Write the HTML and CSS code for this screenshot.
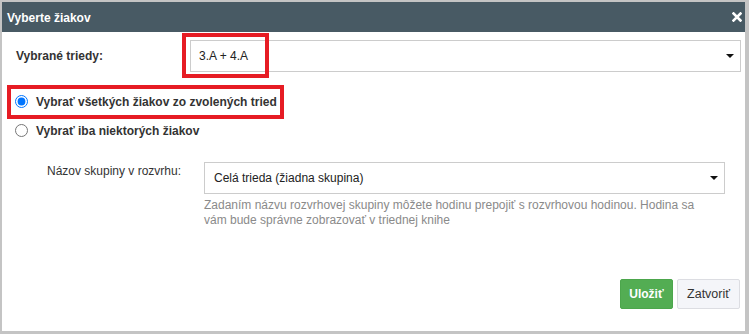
FILE: index.html
```html
<!DOCTYPE html>
<html lang="sk">
<head>
<meta charset="utf-8">
<title>Vyberte žiakov</title>
<link rel="stylesheet" href="styles.css">
</head>
<body>
<div class="modal">
  <div class="modal-header">
    <span class="modal-title">Vyberte žiakov</span>
    <svg class="close" width="10" height="10" viewBox="0 0 10 10" aria-hidden="true">
      <path d="M1.5 1.5 L8.5 8.5 M8.5 1.5 L1.5 8.5" stroke="#fff" stroke-width="2.6" stroke-linecap="square"/>
    </svg>
  </div>
  <div class="modal-body">
    <div class="row-classes">
      <label class="lbl-bold">Vybrané triedy:</label>
      <div class="select sel-classes">
        <span>3.A + 4.A</span>
        <span class="caret"></span>
      </div>
    </div>
    <div class="radios">
      <label class="radio"><input type="radio" name="mode" checked><span class="lbl-bold">Vybrať všetkých žiakov zo zvolených tried</span></label>
      <label class="radio"><input type="radio" name="mode"><span class="lbl-bold">Vybrať iba niektorých žiakov</span></label>
    </div>
    <div class="group-row">
      <label class="group-label">Názov skupiny v rozvrhu:</label>
      <div class="group-field">
        <div class="select sel-group">
          <span>Celá trieda (žiadna skupina)</span>
          <span class="caret"></span>
        </div>
        <p class="help">Zadaním názvu rozvrhovej skupiny môžete hodinu prepojiť s rozvrhovou hodinou. Hodina sa vám bude správne zobrazovať v triednej knihe</p>
      </div>
    </div>
  </div>
  <div class="modal-footer">
    <button class="btn btn-save">Uložiť</button>
    <button class="btn btn-close">Zatvoriť</button>
  </div>
  <div class="mark mark-select"></div>
  <div class="mark mark-radio"></div>
</div>
</body>
</html>
```
FILE: styles.css
```css
* { box-sizing: border-box; }
html, body { margin: 0; padding: 0; }
body {
  width: 749px;
  height: 334px;
  background: #c4c4c4;
  font-family: "Liberation Sans", Arial, sans-serif;
  font-size: 12px;
  color: #333;
  overflow: hidden;
}
.modal {
  position: relative;
  margin: 2px 4px 3px 2px;
  height: 329px;
  background: #fff;
  display: flex;
  flex-direction: column;
}
.modal-header {
  height: 30px;
  background: #485a64;
  display: flex;
  align-items: center;
  justify-content: space-between;
  padding: 0 3px 0 5px;
  color: #fff;
}
.modal-title {
  font-weight: bold;
  font-size: 12px;
  margin-top: 1px;
}
.close { display: block; margin-top: -1px; }
.modal-body {
  padding: 8px 4px 0 14px;
}
.row-classes {
  display: flex;
  align-items: center;
}
.lbl-bold { font-weight: bold; }
.row-classes > label {
  width: 174px;
  flex: none;
}
.select {
  height: 32px;
  border: 1px solid #ccc;
  display: flex;
  align-items: center;
  justify-content: space-between;
  color: #222;
  background: #fff;
}
.sel-classes {
  flex: 1;
  padding: 0 6px 0 8px;
}
.sel-group {
  padding: 0 6px 0 9px;
}
.caret {
  width: 0;
  height: 0;
  border-left: 4px solid transparent;
  border-right: 4px solid transparent;
  border-top: 4px solid #111;
}
.radios {
  margin-top: 15px;
  margin-left: -1px;
}
.radio {
  display: flex;
  align-items: center;
  height: 29px;
}
.radio input {
  margin: 0 8px 0 0;
  width: 13px;
  height: 13px;
  accent-color: #0075ff;
}
.group-row {
  display: flex;
  margin-top: 17px;
  padding-left: 31px;
  padding-right: 16px;
}
.group-label {
  width: 157px;
  flex: none;
  line-height: 18px;
  color: #333;
}
.group-field { flex: 1; }
.help {
  margin: 4px 0 0;
  padding-right: 20px;
  line-height: 15px;
  color: #8a8a8a;
}
.modal-footer {
  margin-top: auto;
  display: flex;
  justify-content: flex-end;
  gap: 4px;
  padding: 0 5px 22px 0;
}
.btn {
  height: 30px;
  font-family: "Liberation Sans", Arial, sans-serif;
  font-size: 12px;
  border-radius: 2px;
  padding: 0;
  cursor: pointer;
}
.btn-save {
  background: #53ad53;
  border: 1px solid #4ca64c;
  color: #fff;
  font-weight: bold;
  width: 53px;
}
.btn-close {
  background: #f4f5f9;
  border: 1px solid #dcdde2;
  color: #333;
  width: 63px;
  font-size: 12.5px;
}
.mark {
  position: absolute;
  border: 4px solid #e61c24;
  pointer-events: none;
}
.mark-select {
  left: 180px;
  top: 31px;
  width: 87px;
  height: 45px;
}
.mark-radio {
  left: 5px;
  top: 83px;
  width: 277px;
  height: 34px;
}
```
